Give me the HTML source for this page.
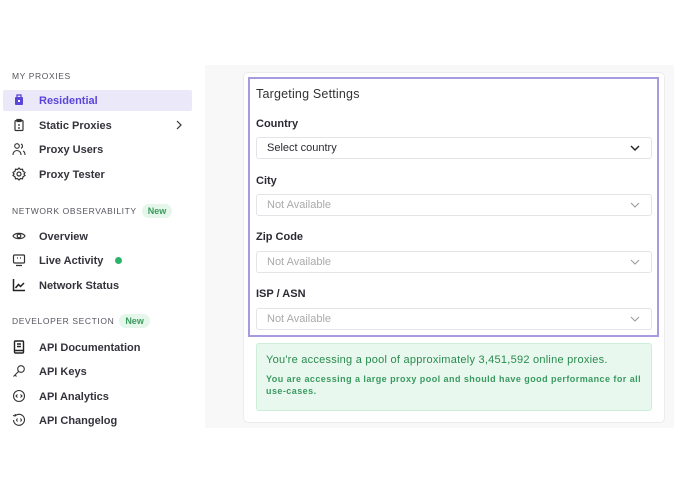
<!DOCTYPE html>
<html><head><style>
*{margin:0;padding:0;box-sizing:border-box}
body{width:674px;height:494px;background:#fff;font-family:"Liberation Sans",sans-serif;position:relative;overflow:hidden;color:#2a2a33}
.sec{position:absolute;left:12px;font-size:8.5px;letter-spacing:.6px;color:#55555f}
.badge{display:inline-block;background:#e4f7ea;color:#3a9a5c;font-size:9px;letter-spacing:0;padding:2px 6px;border-radius:9px;margin-left:5px;font-weight:bold}
.it{position:absolute;left:39px;font-size:11px;color:#33333b;font-weight:bold;transform:translateY(-50%);margin-top:1px}
.ic{position:absolute;left:12px;width:14px;height:14px;transform:translateY(-50%)}
.main{position:absolute;left:205px;top:65px;width:469px;height:363px;background:#f8f8f9}
.card{position:absolute;left:243px;top:72px;width:422px;height:351px;background:#fff;border:1px solid #ececee;border-radius:5px}
.pb{position:absolute;left:248px;top:77px;width:411px;height:260px;border:2.5px solid #a89ae0}
.lbl{position:absolute;left:256px;font-size:11px;font-weight:bold;color:#2a2a33;transform:translateY(-50%);margin-top:1px}
.sel{position:absolute;left:256px;width:396px;height:22px;border:1px solid #e4e4e8;border-radius:3px;font-size:11px;padding-left:10px;line-height:21px;color:#aaa}
.sel svg{position:absolute;right:11px;top:6px}
</style></head><body>
<div class="sec" style="top:71px">MY PROXIES</div>
<div style="position:absolute;left:3px;top:90px;width:189px;height:21px;background:#ebe8fa;border-radius:2px"></div>
<svg class="ic" style="top:100px" viewBox="0 0 14 14"><rect x="3" y="4" width="8" height="8" rx="1" fill="#5a45d6"/><rect x="5" y="2" width="4" height="3" fill="none" stroke="#5a45d6" stroke-width="1.3"/><rect x="6" y="7" width="2" height="2" fill="#fff"/></svg>
<div class="it" style="top:100px;color:#5a45d6">Residential</div>
<svg class="ic" style="top:125px" viewBox="0 0 14 14" fill="none" stroke="#333" stroke-width="1.2"><rect x="3" y="2.5" width="8" height="10" rx="1"/><rect x="5" y="1.5" width="4" height="2"/><path d="M6 7h2M6 10h2"/></svg>
<div class="it" style="top:125px">Static Proxies</div>
<svg style="position:absolute;left:175px;top:120px" width="8" height="10" viewBox="0 0 8 10"><path d="M2 1l4 4-4 4" fill="none" stroke="#333" stroke-width="1.2"/></svg>
<svg class="ic" style="top:149px" viewBox="0 0 14 14" fill="none" stroke="#333" stroke-width="1.1"><circle cx="5" cy="4" r="2.3"/><path d="M1 13c0-3 2-4.5 4-4.5s4 1.5 4 4.5M9 2a2.3 2.3 0 010 4.3M11 9c1.3.6 2 2 2 4"/></svg>
<div class="it" style="top:149px">Proxy Users</div>
<svg class="ic" style="top:174px" viewBox="0 0 14 14" fill="none" stroke="#333" stroke-width="1.2"><circle cx="7" cy="7" r="2"/><path d="M7 1l1.5 1.5 2-.3.5 2L13 5.5 12 7l1 1.5-2 1.3-.5 2-2-.3L7 13l-1.5-1.5-2 .3-.5-2L1 8.5 2 7 1 5.5l2-1.3.5-2 2 .3z"/></svg>
<div class="it" style="top:174px">Proxy Tester</div>
<div class="sec" style="top:204px">NETWORK OBSERVABILITY<span class="badge">New</span></div>
<svg class="ic" style="top:236px" viewBox="0 0 14 14" fill="none" stroke="#333" stroke-width="1.2"><path d="M1 7c2-3.5 10-3.5 12 0-2 3.5-10 3.5-12 0z"/><circle cx="7" cy="7" r="1.8"/></svg>
<div class="it" style="top:236px">Overview</div>
<svg class="ic" style="top:260px" viewBox="0 0 14 14" fill="none" stroke="#333" stroke-width="1.2"><rect x="1.5" y="2" width="11" height="8" rx="1"/><path d="M4 12.5h6M5 5h1M8 5h1"/></svg>
<div class="it" style="top:260px">Live Activity</div>
<div style="position:absolute;left:115px;top:257px;width:7px;height:7px;border-radius:50%;background:#2cb36b"></div>
<svg class="ic" style="top:285px" viewBox="0 0 14 14" fill="none" stroke="#222" stroke-width="1.5"><path d="M1.5 1v11.5H13M3.5 10l3-3.5 2 2L12 5"/></svg>
<div class="it" style="top:285px">Network Status</div>
<div class="sec" style="top:314px">DEVELOPER SECTION<span class="badge">New</span></div>
<svg class="ic" style="top:347px" viewBox="0 0 14 14" fill="none" stroke="#222" stroke-width="1.4"><rect x="2.5" y="1" width="9" height="12" rx="1"/><path d="M5 4h4M5 6.5h4M2.5 10.5h9"/></svg>
<div class="it" style="top:347px">API Documentation</div>
<svg class="ic" style="top:371px" viewBox="0 0 14 14" fill="none" stroke="#333" stroke-width="1.1"><circle cx="9" cy="5" r="3.3"/><path d="M6.5 7.5L1.5 12.5M3 11l1.5 1.5"/></svg>
<div class="it" style="top:371px">API Keys</div>
<svg class="ic" style="top:396px" viewBox="0 0 14 14" fill="none" stroke="#333" stroke-width="1.1"><circle cx="7" cy="7" r="5.5"/><path d="M5.5 5.5L4 7l1.5 1.5M8.5 5.5L10 7 8.5 8.5"/></svg>
<div class="it" style="top:396px">API Analytics</div>
<svg class="ic" style="top:420px" viewBox="0 0 14 14" fill="none" stroke="#333" stroke-width="1.1"><path d="M3 3a5.5 5.5 0 11-1.5 4M1 2.5l2 .5.3-2"/><path d="M5.5 5.5L4.5 7l1 1.5M8.5 5.5l1 1.5-1 1.5"/></svg>
<div class="it" style="top:420px">API Changelog</div>

<div class="main"></div>
<div class="card"></div>
<div class="pb"></div>
<div style="position:absolute;left:256px;top:87px;font-size:12.5px;color:#333;letter-spacing:.2px">Targeting Settings</div>
<div class="lbl" style="top:123px">Country</div>
<div class="sel" style="top:137px;color:#2a2a33">Select country<svg width="10" height="8" viewBox="0 0 10 8"><path d="M1 2l4 4 4-4" fill="none" stroke="#222" stroke-width="1.4"/></svg></div>
<div class="lbl" style="top:180px">City</div>
<div class="sel" style="top:194px">Not Available<svg width="10" height="8" viewBox="0 0 10 8"><path d="M1 2l4 4 4-4" fill="none" stroke="#999" stroke-width="1"/></svg></div>
<div class="lbl" style="top:236px">Zip Code</div>
<div class="sel" style="top:251px">Not Available<svg width="10" height="8" viewBox="0 0 10 8"><path d="M1 2l4 4 4-4" fill="none" stroke="#999" stroke-width="1"/></svg></div>
<div class="lbl" style="top:293px">ISP / ASN</div>
<div class="sel" style="top:308px">Not Available<svg width="10" height="8" viewBox="0 0 10 8"><path d="M1 2l4 4 4-4" fill="none" stroke="#999" stroke-width="1"/></svg></div>
<div style="position:absolute;left:256px;top:343px;width:396px;height:68px;background:#e8f8ee;border:1px solid #cdeed9;border-radius:3px;padding:10px 9px;color:#2a8a4e">
<div style="font-size:11px;letter-spacing:.25px">You're accessing a pool of approximately 3,451,592 online proxies.</div>
<div style="font-size:9px;margin-top:7px;line-height:12px;letter-spacing:.45px;font-weight:bold;color:#3a9a60">You are accessing a large proxy pool and should have good performance for all use-cases.</div>
</div>
</body></html>
